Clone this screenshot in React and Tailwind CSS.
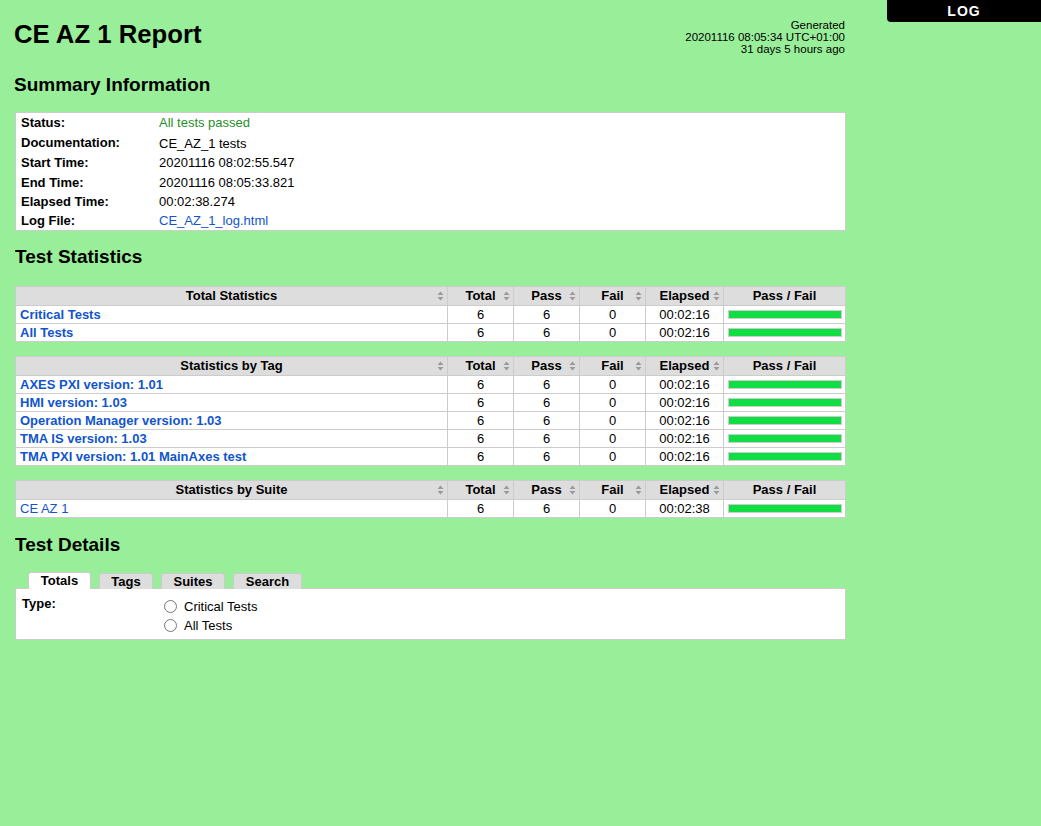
import React from 'react';

const font = "font-['Liberation_Sans',Arial,Helvetica,sans-serif]";

const SortIcon = () => (
  <svg width="7" height="10" viewBox="0 0 7 10" className="absolute right-[3px] top-1/2 -translate-y-1/2">
    <path d="M3.5 0.5 L6.5 4 L0.5 4 Z" fill="#999" />
    <path d="M3.5 9.5 L6.5 6 L0.5 6 Z" fill="#999" />
  </svg>
);

const COLS = 'grid grid-cols-[431px_65px_65px_65px_77px_121px]';

const StatTable = ({ title, rows, bold = true }) => (
  <div className={`${COLS} gap-px bg-[#ccc] border border-[#ccc] w-[831px]`}>
    {[title, 'Total', 'Pass', 'Fail', 'Elapsed'].map((h) => (
      <div key={h} className="relative bg-[#ddd] h-[18px] flex items-center justify-center font-bold text-[13px]">
        {h}
        <SortIcon />
      </div>
    ))}
    <div className="bg-[#ddd] h-[18px] flex items-center justify-center font-bold text-[13px]">Pass / Fail</div>
    {rows.map((r) => (
      <React.Fragment key={r.name}>
        <div className={`bg-white h-[17px] flex items-center pl-[4px] text-[13px] text-[#1155cc] ${bold ? 'font-bold' : ''}`}>{r.name}</div>
        <div className="bg-white h-[17px] flex items-center justify-center text-[13px]">6</div>
        <div className="bg-white h-[17px] flex items-center justify-center text-[13px]">6</div>
        <div className="bg-white h-[17px] flex items-center justify-center text-[13px]">0</div>
        <div className="bg-white h-[17px] flex items-center justify-center text-[13px]">{r.elapsed}</div>
        <div className="bg-white h-[17px] flex items-center pl-[4px]">
          <div className="w-[114px] h-[9px] border border-[#ccc] bg-[#11dd44]" />
        </div>
      </React.Fragment>
    ))}
  </div>
);

const SummaryRow = ({ label, children, h, vpad = '' }) => (
  <div className={`flex items-center ${h}`}>
    <div className="w-[143px] pl-[5px] font-bold">{label}</div>
    <div className={vpad}>{children}</div>
  </div>
);

const Radio = ({ label }) => (
  <div className="flex items-center h-[19px]">
    <span className="w-[13px] h-[13px] rounded-full border border-[#767676] bg-white" />
    <span className="ml-[7px]">{label}</span>
  </div>
);

export default function App() {
  const tags = [
    'AXES PXI version: 1.01',
    'HMI version: 1.03',
    'Operation Manager version: 1.03',
    'TMA IS version: 1.03',
    'TMA PXI version: 1.01 MainAxes test',
  ];
  return (
    <div className={`relative min-h-[826px] bg-[#99ee99] text-black ${font}`}>
      <div className="absolute right-0 top-0 w-[154px] h-[22px] bg-black rounded-bl-[4px] flex items-center justify-center text-white font-bold text-[14px] tracking-[1px]">
        LOG
      </div>
      <div className="ml-[15px] w-[831px]">
        <div className="flex justify-between items-start pt-[19px]">
          <h1 className="text-[25.7px] leading-[30px] font-bold -ml-[1px]">CE AZ 1 Report</h1>
          <div className="text-right text-[11.5px] leading-[12px] pr-[1px]">
            <div>Generated</div>
            <div>20201116 08:05:34 UTC+01:00</div>
            <div>31 days 5 hours ago</div>
          </div>
        </div>

        <h2 className="mt-[18px] text-[19px] leading-[24px] font-bold -ml-[1px]">Summary Information</h2>
        <div className="mt-[15px] bg-white border border-[#ccc] text-[13px]">
          <SummaryRow label="Status:" h="h-[19px]">
            <span className="text-[#1f8f2a]">All tests passed</span>
          </SummaryRow>
          <SummaryRow label="Documentation:" h="h-[21px]" vpad="pt-[3px]">CE_AZ_1 tests</SummaryRow>
          <SummaryRow label="Start Time:" h="h-[20px]">20201116 08:02:55.547</SummaryRow>
          <SummaryRow label="End Time:" h="h-[19px]">20201116 08:05:33.821</SummaryRow>
          <SummaryRow label="Elapsed Time:" h="h-[19px]">00:02:38.274</SummaryRow>
          <SummaryRow label="Log File:" h="h-[19px]">
            <span className="text-[#1155cc]">CE_AZ_1_log.html</span>
          </SummaryRow>
        </div>

        <h2 className="mt-[14px] text-[19px] leading-[24px] font-bold">Test Statistics</h2>
        <div className="mt-[17px] flex flex-col gap-[14px]">
          <StatTable
            title="Total Statistics"
            rows={[
              { name: 'Critical Tests', elapsed: '00:02:16' },
              { name: 'All Tests', elapsed: '00:02:16' },
            ]}
          />
          <StatTable title="Statistics by Tag" rows={tags.map((t) => ({ name: t, elapsed: '00:02:16' }))} />
          <StatTable title="Statistics by Suite" bold={false} rows={[{ name: 'CE AZ 1', elapsed: '00:02:38' }]} />
        </div>

        <h2 className="mt-[15px] text-[19px] leading-[24px] font-bold">Test Details</h2>
        <div className="mt-[15px] flex items-end gap-[8px] pl-[13px] h-[17px] relative z-10">
          <div className="w-[63px] h-[17px] bg-white border border-b-0 border-[#ccc] rounded-t-[3px] flex items-center justify-center font-bold text-[13px]">Totals</div>
          <div className="w-[54px] h-[16px] bg-[#ddd] border border-b-0 border-[#ccc] rounded-t-[3px] flex items-center justify-center font-bold text-[13px]">Tags</div>
          <div className="w-[64px] h-[16px] bg-[#ddd] border border-b-0 border-[#ccc] rounded-t-[3px] flex items-center justify-center font-bold text-[13px]">Suites</div>
          <div className="w-[69px] h-[16px] bg-[#ddd] border border-b-0 border-[#ccc] rounded-t-[3px] flex items-center justify-center font-bold text-[13px]">Search</div>
        </div>
        <div className="bg-white border border-[#ccc] h-[52px] flex text-[13px] -mt-px">
          <div className="w-[148px] pl-[6px] pt-[5px] font-bold">Type:</div>
          <div className="pt-[8px]">
            <Radio label="Critical Tests" />
            <Radio label="All Tests" />
          </div>
        </div>
      </div>
    </div>
  );
}
